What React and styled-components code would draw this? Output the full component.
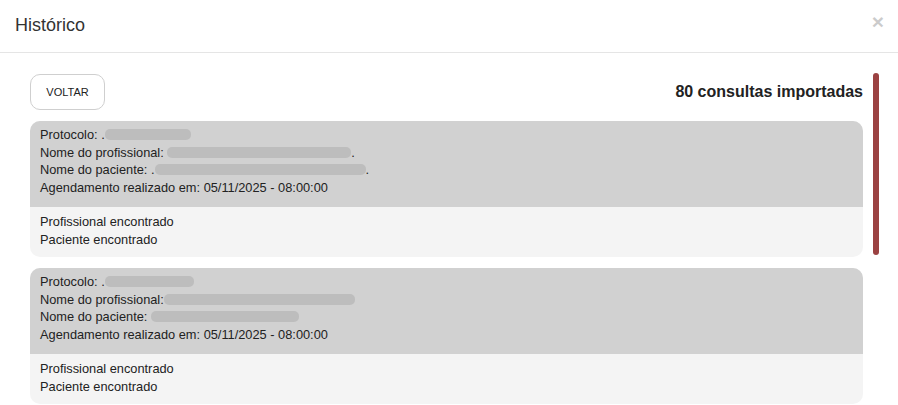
import React from "react";
import styled, { createGlobalStyle } from "styled-components";

const GlobalStyle = createGlobalStyle`
  html, body {
    margin: 0;
    padding: 0;
    background: #ffffff;
    font-family: "Liberation Sans", Arial, sans-serif;
    color: #222;
    overflow: hidden;
  }
  * { box-sizing: border-box; }
`;

const consultas = [
  {
    protocolo: 86,
    profissional: 184,
    paciente: 211,
    profDot: true,
    pacDot: true,
    data: "05/11/2025 - 08:00:00",
  },
  {
    protocolo: 89,
    profissional: 191,
    paciente: 148,
    profDot: false,
    pacDot: false,
    tight: true,
    data: "05/11/2025 - 08:00:00",
  },
];

const App = () => {
  return (
    <>
      <GlobalStyle />
      <Modal>
        <Header>
          <Title>Histórico</Title>
          <Close>×</Close>
        </Header>
        <Body>
          <Content>
            <TopRow>
              <BackButton>VOLTAR</BackButton>
              <Count>80 consultas importadas</Count>
            </TopRow>
            {consultas.map((c, i) => (
              <Card key={i}>
                <CardInfo>
                  <Line>
                    Protocolo: .<Hidden $w={c.protocolo} />
                  </Line>
                  <Line>
                    Nome do profissional:{c.tight ? "" : " "}
                    <Hidden $w={c.profissional} />
                    {c.profDot && "."}
                  </Line>
                  <Line>
                    Nome do paciente: {c.tight ? "" : "."}
                    <Hidden $w={c.paciente} />
                    {c.pacDot && "."}
                  </Line>
                  <Line>Agendamento realizado em: {c.data}</Line>
                </CardInfo>
                <CardStatus>
                  <Line>Profissional encontrado</Line>
                  <Line>Paciente encontrado</Line>
                </CardStatus>
              </Card>
            ))}
          </Content>
          <ScrollRail>
            <Thumb />
          </ScrollRail>
        </Body>
      </Modal>
    </>
  );
};

const Modal = styled.div`
  width: 898px;
  height: 405px;
  display: flex;
  flex-direction: column;
  overflow: hidden;
`;
const Header = styled.div`
  height: 53px;
  padding: 0 15px;
  border-bottom: 1px solid #e5e5e5;
  display: flex;
  align-items: center;
  justify-content: space-between;
  flex-shrink: 0;
`;
const Title = styled.h4`
  margin: 0 0 2px;
  font-size: 18px;
  font-weight: normal;
  color: #333;
`;
const Close = styled.span`
  font-size: 21px;
  font-weight: bold;
  line-height: 1;
  color: #000;
  opacity: 0.2;
  margin: 0 -1px 10px 0;
`;
const Body = styled.div`
  flex: 1;
  display: flex;
  padding: 20px 19px 0 30px;
  gap: 10px;
  overflow: hidden;
`;
const Content = styled.div`
  flex: 1;
  display: flex;
  flex-direction: column;
  gap: 11px;
`;
const TopRow = styled.div`
  display: flex;
  justify-content: space-between;
  align-items: center;
  padding-top: 1px;
`;
const BackButton = styled.button`
  width: 75px;
  height: 36px;
  background: #fff;
  border: 1px solid #cfcfcf;
  border-radius: 10px;
  font-family: "Liberation Sans", Arial, sans-serif;
  font-size: 11px;
  font-weight: normal;
  color: #222;
  cursor: pointer;
`;
const Count = styled.h3`
  margin: 0;
  font-size: 16px;
  font-weight: bold;
  color: #222;
`;
const Card = styled.div`
  border-radius: 10px;
  overflow: hidden;
  background: #f4f4f4;
  flex-shrink: 0;
`;
const CardInfo = styled.div`
  background: #d1d1d1;
  padding: 5px 10px 11px;
`;
const CardStatus = styled.div`
  padding: 6px 10px 9px;
`;
const Line = styled.div`
  font-size: 12.8px;
  line-height: 17.5px;
  height: 17.5px;
  color: #222;
  white-space: nowrap;
`;
const Hidden = styled.span`
  display: inline-block;
  width: ${(p) => p.$w}px;
  height: 11px;
  border-radius: 5px;
  background: #bdbdbd;
  vertical-align: -1px;
`;
const ScrollRail = styled.div`
  width: 6px;
  flex-shrink: 0;
`;
const Thumb = styled.div`
  height: 182px;
  border-radius: 3px;
  background: #9b4242;
`;

export default App;
